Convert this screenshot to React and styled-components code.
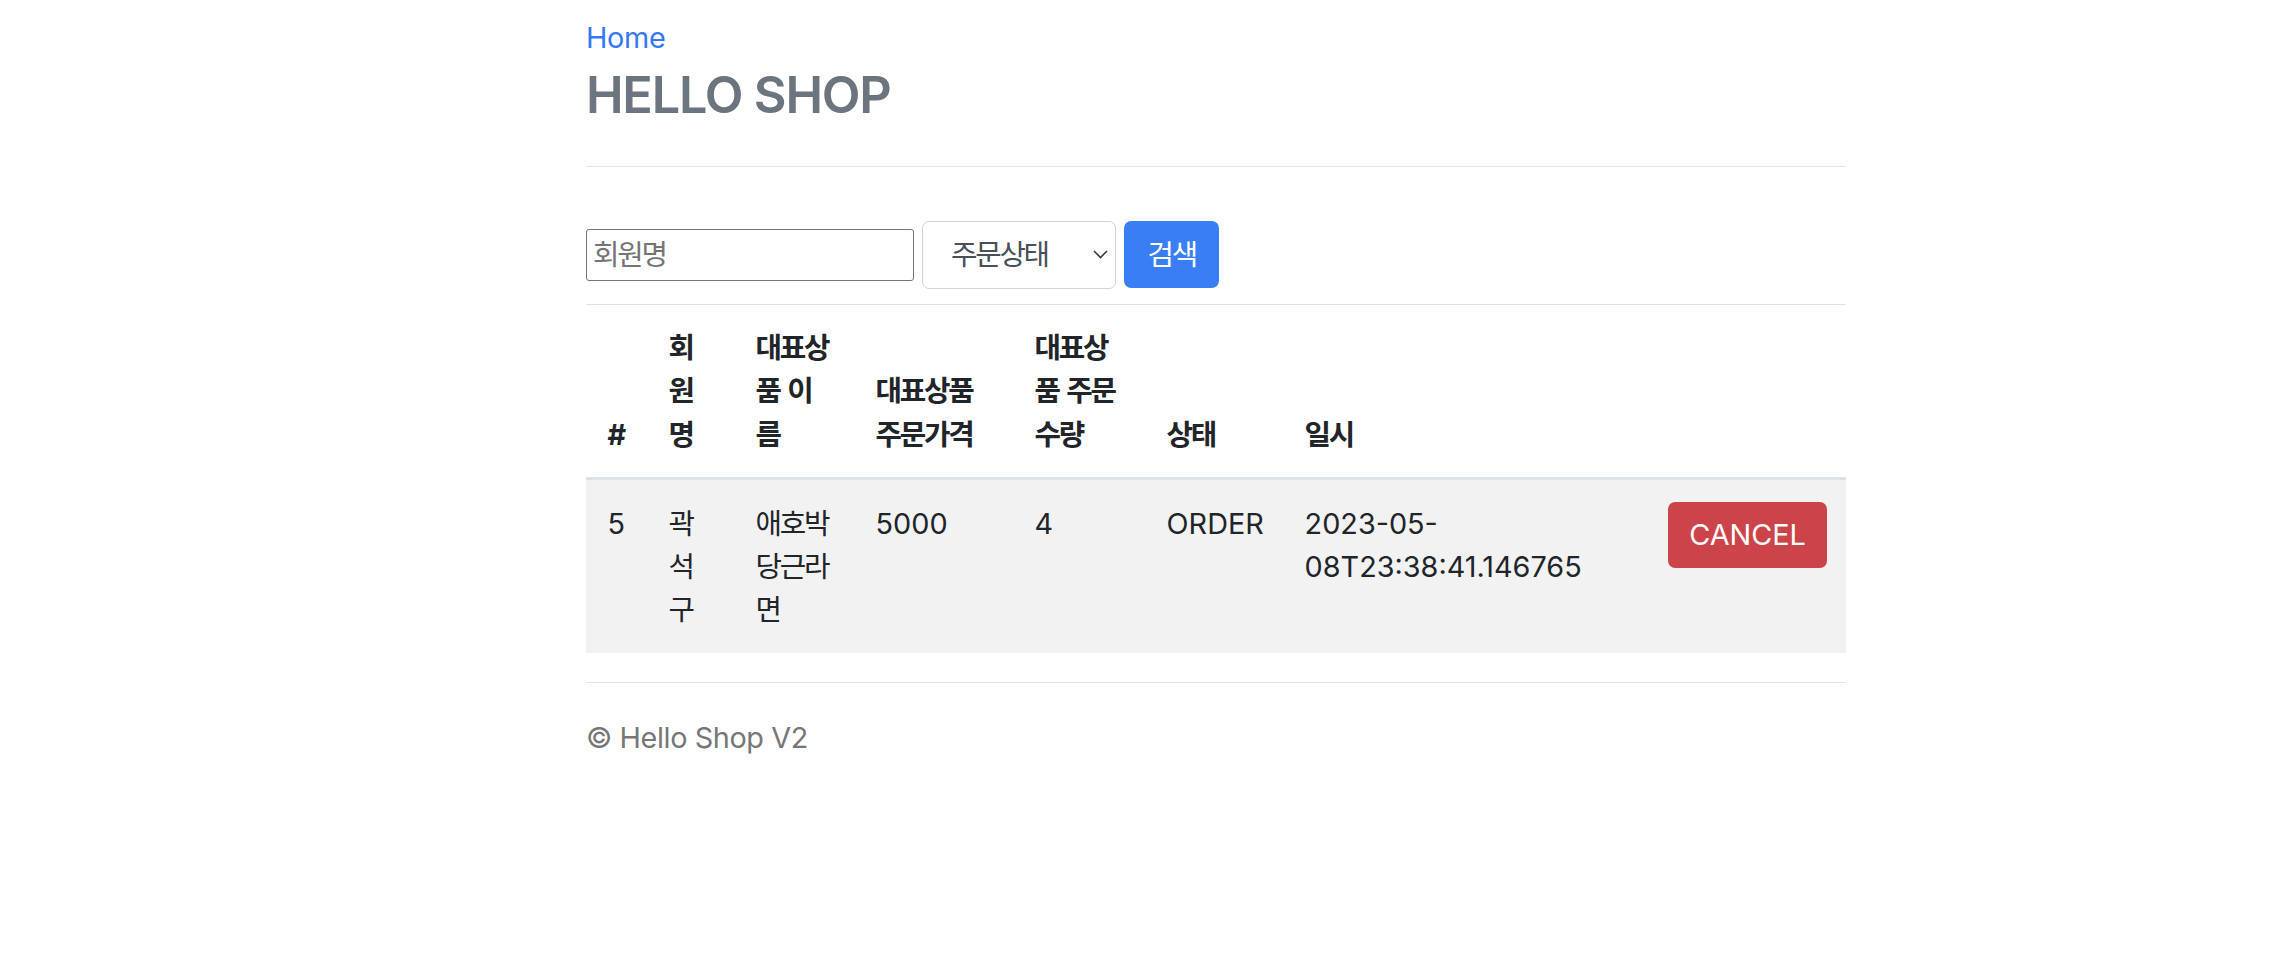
import React from "react";
import styled, { createGlobalStyle } from "styled-components";

const GlobalStyle = createGlobalStyle`
  *, *::before, *::after { box-sizing: border-box; }
  html, body { margin: 0; padding: 0; background: #ffffff; }
  body {
    font-family: Inter, "Noto Sans CJK KR", sans-serif;
    font-size: 28.8px;
    line-height: 1.5;
    color: #212529;
  }
`;

// Hangul in Noto Sans CJK runs wider than the reference's Korean face
const KO_SPACING = "-2.3px";
const KO_WORD = "3px";

const Container = styled.div`
  width: 1260px;
  margin-left: 586px;
`;

const Header = styled.div`
  padding-top: 16px;
  padding-bottom: 34.5px;
  border-bottom: 1.8px solid #e5e5e5;
  margin-bottom: 54px;
`;

const HomeLink = styled.a`
  display: block;
  color: #3478f6;
  text-decoration: none;
  line-height: 43.2px;
  letter-spacing: -0.3px;
`;

const Title = styled.h3`
  margin: 0;
  font-size: 50.4px;
  font-weight: 600;
  line-height: 72px;
  color: #6c757d;
  letter-spacing: -1.2px;
`;

const SearchForm = styled.form`
  display: flex;
  align-items: center;
  gap: 8px;
  height: 68px;
  margin-bottom: 15px;
`;

const NameInput = styled.input`
  width: 328px;
  height: 52px;
  padding: 0 6px;
  border: 1.8px solid #767676;
  border-radius: 3px;
  font-family: inherit;
  font-size: 28.8px;
  color: #212529;
  letter-spacing: ${KO_SPACING};
  &::placeholder { color: #757575; }
`;

const SelectWrap = styled.div`
  position: relative;
  width: 194px;
  height: 68px;
`;

const StatusSelect = styled.select`
  appearance: none;
  width: 100%;
  height: 100%;
  padding: 0 0 0 28px;
  border: 1.8px solid #ced4da;
  border-radius: 7px;
  background: #ffffff;
  font-family: inherit;
  font-size: 28.8px;
  color: #495057;
  letter-spacing: ${KO_SPACING};
`;

const Chevron = styled.svg`
  position: absolute;
  right: 8px;
  top: 29px;
  width: 15px;
  height: 9px;
  pointer-events: none;
`;

const Button = styled.button`
  display: inline-flex;
  align-items: center;
  justify-content: center;
  height: ${(p) => p.$h}px;
  padding: 0 ${(p) => p.$px}px;
  border: none;
  border-radius: 7.2px;
  background: ${(p) => p.$bg};
  color: #ffffff;
  font-family: inherit;
  font-size: 28.8px;
  line-height: 1.5;
  letter-spacing: ${(p) => (p.$ko ? KO_SPACING : "normal")};
  cursor: pointer;
`;

const Table = styled.table`
  width: 100%;
  table-layout: fixed;
  border-collapse: collapse;
  margin-bottom: 28.8px;
`;

const Th = styled.th`
  width: ${(p) => p.$w}px;
  padding: 21.6px;
  text-align: left;
  vertical-align: bottom;
  font-weight: 700;
  border-top: 1.8px solid #dee2e6;
  border-bottom: 3.6px solid #dee2e6;
  letter-spacing: ${(p) => (p.$ko ? KO_SPACING : "normal")};
  word-spacing: ${(p) => (p.$ko ? KO_WORD : "normal")};
`;

const Row = styled.tr`
  background: ${(p) => (p.$striped ? "#f2f2f2" : "transparent")};
`;

const Td = styled.td`
  padding: 21.6px;
  vertical-align: top;
  letter-spacing: ${(p) => (p.$ko ? KO_SPACING : "normal")};
`;

const Footer = styled.div`
  padding-top: 33px;
  border-top: 1.8px solid #e5e5e5;
  color: #777777;
  line-height: 43.2px;
  letter-spacing: -0.4px;
`;

const columns = [
  { label: "#", w: 61 },
  { label: "회원명", w: 87, ko: true },
  { label: "대표상품 이름", w: 120, ko: true },
  { label: "대표상품 주문가격", w: 159, ko: true },
  { label: "대표상품 주문 수량", w: 132, ko: true },
  { label: "상태", w: 138, ko: true },
  { label: "일시", w: 363, ko: true },
  { label: "", w: 200 },
];

const orders = [
  {
    id: 5,
    member: "곽석구",
    item: "애호박당근라면",
    price: 5000,
    count: 4,
    status: "ORDER",
    date: "2023-05-08T23:38:41.146765",
  },
];

export default function App() {
  return (
    <>
      <GlobalStyle />
      <Container>
        <Header>
          <HomeLink href="#">Home</HomeLink>
          <Title>HELLO SHOP</Title>
        </Header>

        <SearchForm onSubmit={(e) => e.preventDefault()}>
          <NameInput type="text" placeholder="회원명" />
          <SelectWrap>
            <StatusSelect defaultValue="">
              <option value="">주문상태</option>
              <option value="ORDER">ORDER</option>
              <option value="CANCEL">CANCEL</option>
            </StatusSelect>
            <Chevron viewBox="0 0 15 9">
              <path d="M1 1 L7.5 7.5 L14 1" fill="none" stroke="#3c3c3c" strokeWidth="1.6" />
            </Chevron>
          </SelectWrap>
          <Button type="submit" $h={67} $px={23.5} $bg="#3a7ef6" $ko>
            검색
          </Button>
        </SearchForm>

        <Table>
          <thead>
            <tr>
              {columns.map((c, i) => (
                <Th key={i} $w={c.w} $ko={c.ko}>
                  {c.label}
                </Th>
              ))}
            </tr>
          </thead>
          <tbody>
            {orders.map((o, i) => (
              <Row key={o.id} $striped={i % 2 === 0}>
                <Td>{o.id}</Td>
                <Td $ko>{o.member}</Td>
                <Td $ko>{o.item}</Td>
                <Td>{o.price}</Td>
                <Td>{o.count}</Td>
                <Td>{o.status}</Td>
                <Td>{o.date}</Td>
                <Td>
                  <Button type="button" $h={66} $px={21.6} $bg="#cb444a">
                    CANCEL
                  </Button>
                </Td>
              </Row>
            ))}
          </tbody>
        </Table>

        <Footer>© Hello Shop V2</Footer>
      </Container>
    </>
  );
}
